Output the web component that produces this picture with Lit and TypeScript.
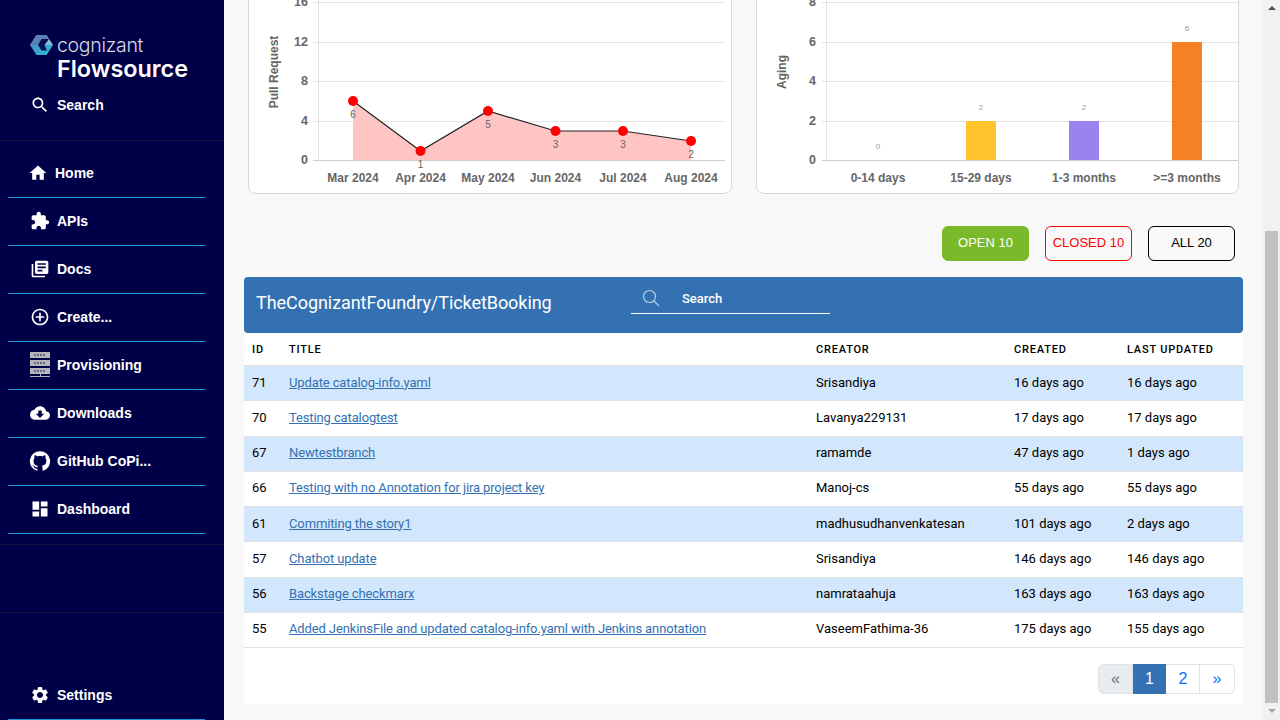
import { LitElement, html, css, svg } from 'lit';
import { customElement } from 'lit/decorators.js';

const ICONS: Record<string, string> = {
  search: 'M15.5 14h-.79l-.28-.27C15.41 12.59 16 11.11 16 9.5 16 5.91 13.09 3 9.5 3S3 5.91 3 9.5 5.91 16 9.5 16c1.61 0 3.09-.59 4.23-1.57l.27.28v.79l5 4.99L20.49 19l-4.99-5zm-6 0C7.01 14 5 11.99 5 9.5S7.01 5 9.5 5 14 7.01 14 9.5 11.99 14 9.5 14z',
  home: 'M10 20v-6h4v6h5v-8h3L12 3 2 12h3v8z',
  apis: 'M20.5 11H19V7c0-1.1-.9-2-2-2h-4V3.5C13 2.12 11.88 1 10.5 1S8 2.12 8 3.5V5H4c-1.1 0-1.99.9-1.99 2v3.8H3.5c1.49 0 2.7 1.21 2.7 2.7s-1.21 2.7-2.7 2.7H2V20c0 1.1.9 2 2 2h3.8v-1.5c0-1.49 1.21-2.7 2.7-2.7 1.49 0 2.7 1.21 2.7 2.7V22H17c1.1 0 2-.9 2-2v-4h1.5c1.38 0 2.5-1.12 2.5-2.5S21.88 11 20.5 11z',
  docs: 'M4 6H2v14c0 1.1.9 2 2 2h14v-2H4V6zm16-4H8c-1.1 0-2 .9-2 2v12c0 1.1.9 2 2 2h12c1.1 0 2-.9 2-2V4c0-1.1-.9-2-2-2zm-1 9H9V9h10v2zm-4 4H9v-2h6v2zm4-8H9V5h10v2z',
  create: 'M13 7h-2v4H7v2h4v4h2v-4h4v-2h-4V7zm-1-5C6.48 2 2 6.48 2 12s4.48 10 10 10 10-4.48 10-10S17.52 2 12 2zm0 18c-4.41 0-8-3.59-8-8s3.59-8 8-8 8 3.59 8 8-3.59 8-8 8z',
  downloads: 'M19.35 10.04C18.67 6.59 15.64 4 12 4 9.11 4 6.6 5.64 5.35 8.04 2.34 8.36 0 10.91 0 14c0 3.31 2.69 6 6 6h13c2.76 0 5-2.24 5-5 0-2.64-2.05-4.78-4.65-4.96zM17 13l-5 5-5-5h3V9h4v4h3z',
  github: 'M12 1.27a11 11 0 00-3.48 21.46c.55.09.73-.28.73-.55v-1.84c-3.03.64-3.67-1.46-3.67-1.46-.55-1.29-1.28-1.65-1.28-1.65-.92-.65.1-.65.1-.65 1.1 0 1.73 1.1 1.73 1.1.92 1.65 2.57 1.2 3.21.92a2 2 0 01.64-1.47c-2.47-.27-5.04-1.19-5.04-5.5 0-1.1.46-2.1 1.2-2.84a3.76 3.76 0 010-2.93s.91-.28 3.11 1.1c1.8-.49 3.7-.49 5.5 0 2.1-1.38 3.02-1.1 3.02-1.1a3.76 3.76 0 010 2.93c.83.74 1.2 1.74 1.2 2.94 0 4.21-2.57 5.13-5.04 5.4.45.37.82.92.82 2.02v3.03c0 .27.1.64.73.55A11 11 0 0012 1.27',
  dashboard: 'M3 13h8V3H3v10zm0 8h8v-6H3v6zm10 0h8V11h-8v10zm0-18v6h8V3h-8z',
  settings: 'M19.14 12.94c.04-.3.06-.61.06-.94 0-.32-.02-.64-.07-.94l2.03-1.58c.18-.14.23-.41.12-.61l-1.92-3.32c-.12-.22-.37-.29-.59-.22l-2.39.96c-.5-.38-1.03-.7-1.62-.94l-.36-2.54c-.04-.24-.24-.41-.48-.41h-3.84c-.24 0-.43.17-.47.41l-.36 2.54c-.59.24-1.13.57-1.62.94l-2.39-.96c-.22-.08-.47 0-.59.22L2.74 8.87c-.12.21-.08.47.12.61l2.03 1.58c-.05.3-.09.63-.09.94s.02.64.07.94l-2.03 1.58c-.18.14-.23.41-.12.61l1.92 3.32c.12.22.37.29.59.22l2.39-.96c.5.38 1.03.7 1.62.94l.36 2.54c.05.24.24.41.48.41h3.84c.24 0 .44-.17.47-.41l.36-2.54c.59-.24 1.13-.56 1.62-.94l2.39.96c.22.08.47 0 .59-.22l1.92-3.32c.12-.22.07-.47-.12-.61l-2.01-1.58zM12 15.6c-1.98 0-3.6-1.62-3.6-3.6s1.62-3.6 3.6-3.6 3.6 1.62 3.6 3.6-1.62 3.6-3.6 3.6z',
};

const NAV = [
  { label: 'Home', icon: 'home' },
  { label: 'APIs', icon: 'apis' },
  { label: 'Docs', icon: 'docs' },
  { label: 'Create...', icon: 'create' },
  { label: 'Provisioning', icon: 'rack' },
  { label: 'Downloads', icon: 'downloads' },
  { label: 'GitHub CoPi...', icon: 'github' },
  { label: 'Dashboard', icon: 'dashboard' },
];

const ROWS = [
  ['71', 'Update catalog-info.yaml', 'Srisandiya', '16 days ago', '16 days ago'],
  ['70', 'Testing catalogtest', 'Lavanya229131', '17 days ago', '17 days ago'],
  ['67', 'Newtestbranch', 'ramamde', '47 days ago', '1 days ago'],
  ['66', 'Testing with no Annotation for jira project key', 'Manoj-cs', '55 days ago', '55 days ago'],
  ['61', 'Commiting the story1', 'madhusudhanvenkatesan', '101 days ago', '2 days ago'],
  ['57', 'Chatbot update', 'Srisandiya', '146 days ago', '146 days ago'],
  ['56', 'Backstage checkmarx', 'namrataahuja', '163 days ago', '163 days ago'],
  ['55', 'Added JenkinsFile and updated catalog-info.yaml with Jenkins annotation', 'VaseemFathima-36', '175 days ago', '155 days ago'],
];

const GRID_Y = [2, 42, 81, 121, 160];
const PR_POINTS = [
  { x: 353, y: 101, v: 6, m: 'Mar 2024' },
  { x: 420.5, y: 151, v: 1, m: 'Apr 2024' },
  { x: 488, y: 111, v: 5, m: 'May 2024' },
  { x: 555.5, y: 131, v: 3, m: 'Jun 2024' },
  { x: 623, y: 131, v: 3, m: 'Jul 2024' },
  { x: 691, y: 141, v: 2, m: 'Aug 2024' },
];
const AGING = [
  { x: 878, v: 0, m: '0-14 days', color: '', top: 160 },
  { x: 981, v: 2, m: '15-29 days', color: '#ffc42e', top: 121 },
  { x: 1084, v: 2, m: '1-3 months', color: '#9a82f0', top: 121 },
  { x: 1187, v: 6, m: '>=3 months', color: '#f58025', top: 42 },
];

@customElement('app-root')
export class AppRoot extends LitElement {
  static styles = css`
    :host {
      display: flex;
      width: 1280px;
      height: 720px;
      overflow: hidden;
      font-family: Roboto, 'Liberation Sans', sans-serif;
      background: #f8f8f8;
    }

    /* Sidebar */
    .sidebar {
      width: 224px;
      flex: none;
      background: #000048;
      color: #fff;
      display: flex;
      flex-direction: column;
    }
    .brand {
      height: 141px;
      flex: none;
      box-sizing: border-box;
      border-bottom: 1px solid #14143f;
      padding: 34px 0 0 30px;
    }
    .logo {
      display: flex;
      align-items: center;
      height: 22px;
      gap: 4px;
    }
    .logo-word {
      font-family: Inter, sans-serif;
      font-weight: 300;
      font-size: 19.5px;
      line-height: 22px;
      letter-spacing: -0.3px;
      color: #d9d9e4;
    }
    .product {
      margin: 0 0 0 27px;
      font-family: Inter, sans-serif;
      font-weight: 600;
      font-size: 23.4px;
      line-height: 26px;
    }
    .side-search {
      display: flex;
      align-items: center;
      gap: 7px;
      margin: 11px 0 0 0;
      height: 24px;
      font-family: 'Liberation Sans', sans-serif;
      font-size: 14px;
      font-weight: 700;
    }
    .side-search svg {
      width: 20px;
      height: 20px;
      fill: #fff;
    }
    .nav {
      padding-top: 9px;
      flex: none;
    }
    .item {
      display: flex;
      align-items: center;
      gap: 7px;
      height: 48px;
      box-sizing: border-box;
      margin: 0 19px 0 8px;
      padding: 0 0 2px 22px;
      border-bottom: 1px solid #1b93dc;
      font-family: 'Liberation Sans', sans-serif;
      font-size: 14px;
      font-weight: 700;
      color: #fff;
    }
    .item svg {
      width: 20px;
      height: 20px;
      fill: #fff;
      flex: none;
    }
    .item.home {
      gap: 7px;
      padding-left: 20px;
    }
    .item.github svg {
      width: 22px;
      height: 22px;
      margin: 0 -1px;
    }
    .rule {
      flex: none;
      height: 69px;
      box-sizing: border-box;
      margin-top: 10px;
      border-top: 1px solid #14143f;
      border-bottom: 1px solid #14143f;
    }
    .item.settings {
      margin-top: auto;
      flex: none;
    }

    /* Main column */
    .main {
      flex: 1;
      min-width: 0;
      padding: 0 20px;
      display: flex;
      flex-direction: column;
    }
    .charts {
      display: flex;
      gap: 24px;
      margin: -20px 4px 0;
    }
    .card {
      height: 214px;
      box-sizing: border-box;
      border: 1px solid #d6d6d6;
      border-radius: 8px;
      background: #fff;
      overflow: hidden;
    }
    .card svg {
      display: block;
      margin: -1px;
    }
    .card.left { width: 484px; }
    .card.right { width: 483px; }
    .axis-label {
      font-family: 'Liberation Sans', sans-serif;
      font-size: 12px;
      font-weight: 700;
      fill: #666;
    }
    .y-label {
      font-family: 'Liberation Sans', sans-serif;
      font-size: 12.5px;
      font-weight: 700;
      fill: #666;
      text-anchor: end;
    }
    .pr-value {
      font-family: 'Liberation Sans', sans-serif;
      font-size: 10px;
      fill: #666;
      text-anchor: middle;
    }
    .bar-value {
      font-family: 'Liberation Sans', sans-serif;
      font-size: 8px;
      fill: #999;
      text-anchor: middle;
    }

    .filters {
      display: flex;
      justify-content: flex-end;
      gap: 16px;
      margin: 32px 8px 16px 0;
    }
    .filter {
      width: 87px;
      height: 35px;
      box-sizing: border-box;
      display: flex;
      align-items: center;
      justify-content: center;
      padding-bottom: 3px;
      border-radius: 6px;
      border: 1px solid #000;
      font-family: 'Liberation Sans', sans-serif;
      font-size: 13px;
      color: #000;
    }
    .filter.open {
      background: #7ab929;
      border-color: #7ab929;
      color: #fff;
    }
    .filter.closed {
      border-color: #f00;
      color: #f00;
    }

    /* Table panel */
    .panel {
      background: #fff;
      height: 427px;
      flex: none;
    }
    .bar {
      height: 56px;
      background: #3371b2;
      border-radius: 4px;
      color: #fff;
      display: flex;
      align-items: center;
      padding-left: 12px;
    }
    .bar h2 {
      margin: 0 0 6px;
      width: 375px;
      font-size: 18px;
      font-weight: 400;
      letter-spacing: -0.06px;
    }
    .bar-search {
      width: 199px;
      height: 30px;
      box-sizing: border-box;
      border-bottom: 1px solid #fff;
      display: flex;
      align-items: center;
      gap: 22px;
      padding: 0 0 1px 11px;
      margin-bottom: 12px;
      font-size: 13px;
      font-weight: 500;
    }
    .bar-search svg {
      width: 18px;
      height: 18px;
      fill: none;
      stroke: #b9cde4;
      stroke-width: 1.2;
    }
    table {
      width: 100%;
      table-layout: fixed;
      border-collapse: collapse;
      font-size: 13px;
      color: #000;
    }
    th {
      height: 32px;
      padding: 0 0 0 8px;
      text-align: left;
      font-size: 11px;
      font-weight: 500;
      letter-spacing: 0.8px;
      border-bottom: 1px solid #e0e0e0;
    }
    td {
      height: 35.25px;
      padding: 0 0 2px 8px;
      box-sizing: border-box;
      border-bottom: 1px solid #e0e0e0;
    }
    tbody tr:nth-child(odd) {
      background: #d3e7fc;
    }
    a {
      color: #3371b2;
      text-decoration: underline;
      letter-spacing: -0.12px;
    }
    .pager {
      display: flex;
      justify-content: flex-end;
      margin: 16px 8px 0 0;
    }
    .page {
      width: 34px;
      height: 30px;
      box-sizing: border-box;
      display: flex;
      align-items: center;
      justify-content: center;
      border: 1px solid #dee2e6;
      border-left-width: 0;
      font-family: 'Liberation Sans', sans-serif;
      font-size: 16px;
      color: #0d6efd;
      background: #fff;
    }
    .page.num {
      padding-left: 1px;
    }
    .page.first {
      width: 35px;
      border-left-width: 1px;
      border-radius: 6px 0 0 6px;
      background: #e9ecef;
      color: #6c757d;
    }
    .page.last {
      width: 35px;
      border-radius: 0 6px 6px 0;
    }
    .page.active {
      width: 33px;
      background: #3371b2;
      border-color: #3371b2;
      color: #fff;
    }

    /* Fake page scrollbar, the screenshot is scrolled */
    .scrollbar {
      width: 17px;
      flex: none;
      background: #f1f1f1;
      display: flex;
      flex-direction: column;
      align-items: center;
    }
    .arrow {
      width: 0;
      height: 0;
      border-left: 4px solid transparent;
      border-right: 4px solid transparent;
      flex: none;
    }
    .arrow.up {
      margin-top: 6px;
      border-bottom: 4px solid #505050;
    }
    .arrow.down {
      margin-top: 6px;
      border-top: 4px solid #a3a3a3;
    }
    .thumb {
      width: 13px;
      height: 472px;
      margin-top: 221px;
      background: #c1c1c1;
      flex: none;
    }
  `;

  private icon(name: string) {
    if (name === 'rack') return this.rackIcon();
    return html`<svg viewBox="0 0 24 24"><path d=${ICONS[name]}></path></svg>`;
  }

  private rackIcon() {
    const rows = [0, 8, 16];
    return html`<svg viewBox="0 0 20 25" style="height:25px">
      ${rows.map(
        (y) => svg`
          <rect x="0" y=${y} width="20" height="6" fill="#b4b4bc"></rect>
          ${[4, 7, 10, 13].map((x) => svg`<rect x=${x} y=${y + 2} width="2" height="2" fill="#6a6a86"></rect>`)}
        `
      )}
      <rect x="0" y="24" width="20" height="1" fill="#b4b4bc"></rect>
      <rect x="10" y="22" width="1" height="2" fill="#b4b4bc"></rect>
    </svg>`;
  }

  private renderLogo() {
    return html`<svg width="23" height="22" viewBox="0 0 23 22">
      <defs>
        <linearGradient id="hexa" x1="0" y1="0" x2="1" y2="1">
          <stop offset="0" stop-color="#4a78b8"></stop>
          <stop offset="0.5" stop-color="#3f9fcf"></stop>
          <stop offset="1" stop-color="#27c0c8"></stop>
        </linearGradient>
      </defs>
      <path d="M6.5 1 H16.5 L23 11 L16.5 21 H6.5 L0 11 Z" fill="url(#hexa)"></path>
      <path d="M6.5 1 H16.5 L19 5 H11 L7 11 H0 Z" fill="#5d7fb4"></path>
      <path d="M23 11 L19 5 H11.5 L8 11 L11.5 16.5 H17 L14.5 11 Z" fill="#000048" opacity="0.9"></path>
      <path d="M19 5 L23 11 H14.5 Z" fill="#9fdce8" opacity="0.85"></path>
    </svg>`;
  }

  private renderPullChart() {
    const line = PR_POINTS.map((p) => `${p.x},${p.y}`).join(' ');
    const area = `353,160 ${line} 691,160`;
    const yLabels = ['16', '12', '8', '4', '0'];
    return html`<svg width="484" height="214" viewBox="248 -20 484 214">
      ${GRID_Y.map(
        (y, i) => svg`
          <line x1="313" x2="725" y1=${y + 0.5} y2=${y + 0.5} stroke=${i === 4 ? '#cfcfcf' : '#e4e4e4'}></line>
          <text class="y-label" x="308" y=${y + 4}>${yLabels[i]}</text>
        `
      )}
      <line x1="318.5" x2="318.5" y1="-20" y2="160" stroke="#e4e4e4"></line>
      <polygon points=${area} fill="#ffc4c4"></polygon>
      <polyline points=${line} fill="none" stroke="#222" stroke-width="1.2"></polyline>
      ${PR_POINTS.map(
        (p) => svg`
          <circle cx=${p.x} cy=${p.y} r="5" fill="#f00"></circle>
          <text class="pr-value" x=${p.x} y=${p.y + 17}>${p.v}</text>
          <text class="axis-label" x=${p.x} y="182" text-anchor="middle">${p.m}</text>
        `
      )}
      <text class="axis-label" text-anchor="middle" transform="translate(278 72) rotate(-90)">Pull Request</text>
    </svg>`;
  }

  private renderAgingChart() {
    const yLabels = ['8', '6', '4', '2', '0'];
    return html`<svg width="483" height="214" viewBox="756 -20 483 214">
      ${GRID_Y.map(
        (y, i) => svg`
          <line x1="822" x2="1239" y1=${y + 0.5} y2=${y + 0.5} stroke=${i === 4 ? '#cfcfcf' : '#e4e4e4'}></line>
          <text class="y-label" x="816" y=${y + 4}>${yLabels[i]}</text>
        `
      )}
      <line x1="826.5" x2="826.5" y1="-20" y2="160" stroke="#e4e4e4"></line>
      ${AGING.map(
        (b) => svg`
          ${b.color ? svg`<rect x=${b.x - 15} y=${b.top} width="30" height=${160 - b.top} fill=${b.color}></rect>` : ''}
          <text class="bar-value" x=${b.x} y=${b.top - 11}>${b.v}</text>
          <text class="axis-label" x=${b.x} y="182" text-anchor="middle">${b.m}</text>
        `
      )}
      <text class="axis-label" text-anchor="middle" transform="translate(786 72) rotate(-90)">Aging</text>
    </svg>`;
  }

  render() {
    return html`
      <aside class="sidebar">
        <div class="brand">
          <div class="logo">${this.renderLogo()}<span class="logo-word">cognizant</span></div>
          <div class="product">Flowsource</div>
          <div class="side-search">${this.icon('search')}<span>Search</span></div>
        </div>
        <nav class="nav">
          ${NAV.map(
            (n) => html`<div class="item ${n.icon}">${this.icon(n.icon)}<span>${n.label}</span></div>`
          )}
        </nav>
        <div class="rule"></div>
        <div class="item settings">${this.icon('settings')}<span>Settings</span></div>
      </aside>

      <main class="main">
        <section class="charts">
          <div class="card left">${this.renderPullChart()}</div>
          <div class="card right">${this.renderAgingChart()}</div>
        </section>

        <div class="filters">
          <div class="filter open">OPEN 10</div>
          <div class="filter closed">CLOSED 10</div>
          <div class="filter">ALL 20</div>
        </div>

        <section class="panel">
          <div class="bar">
            <h2>TheCognizantFoundry/TicketBooking</h2>
            <div class="bar-search">
              <svg viewBox="0 0 18 18">
                <circle cx="7.5" cy="7.5" r="6"></circle>
                <line x1="12" y1="12" x2="17" y2="17"></line>
              </svg>
              <span>Search</span>
            </div>
          </div>
          <table>
            <colgroup>
              <col style="width:37px" />
              <col style="width:527px" />
              <col style="width:198px" />
              <col style="width:113px" />
              <col />
            </colgroup>
            <thead>
              <tr>
                <th>ID</th>
                <th>TITLE</th>
                <th>CREATOR</th>
                <th>CREATED</th>
                <th>LAST UPDATED</th>
              </tr>
            </thead>
            <tbody>
              ${ROWS.map(
                (r) => html`<tr>
                  <td>${r[0]}</td>
                  <td><a href="#">${r[1]}</a></td>
                  <td>${r[2]}</td>
                  <td>${r[3]}</td>
                  <td>${r[4]}</td>
                </tr>`
              )}
            </tbody>
          </table>
          <div class="pager">
            <div class="page first">«</div>
            <div class="page active num">1</div>
            <div class="page num">2</div>
            <div class="page last">»</div>
          </div>
        </section>
      </main>

      <div class="scrollbar">
        <div class="arrow up"></div>
        <div class="thumb"></div>
        <div class="arrow down"></div>
      </div>
    `;
  }
}
